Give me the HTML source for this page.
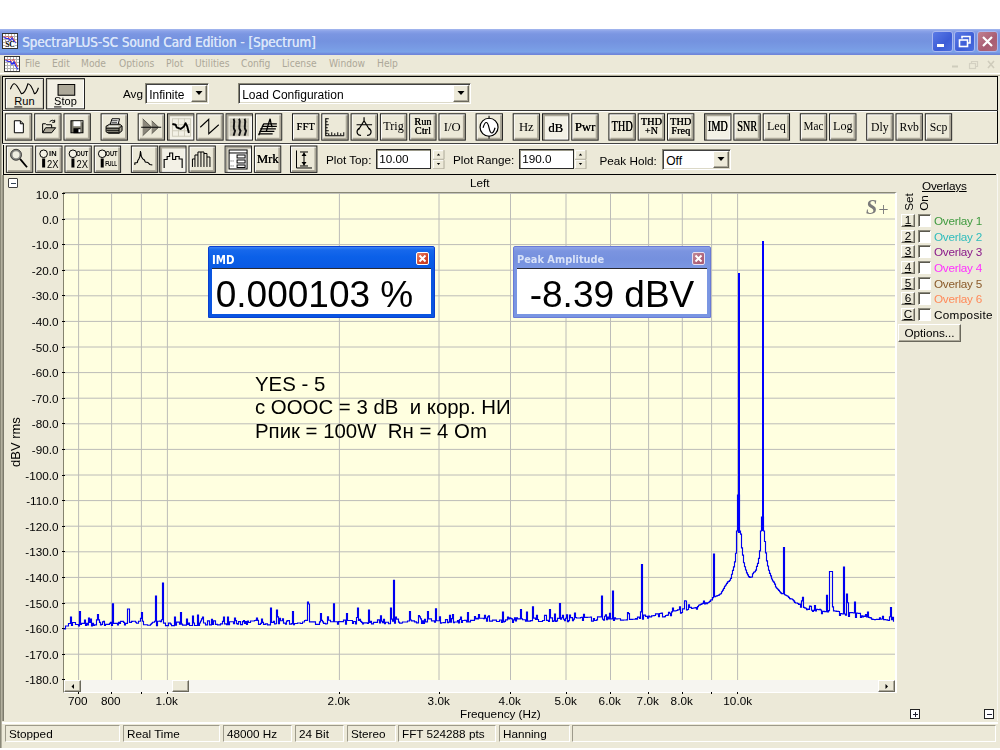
<!DOCTYPE html>
<html lang="ru"><head><meta charset="utf-8"><title>SpectraPLUS-SC Sound Card Edition - [Spectrum]</title>
<style>
html,body{margin:0;padding:0;background:#fff}
body{width:1000px;height:750px;position:relative;overflow:hidden;font-family:"Liberation Sans",sans-serif;font-size:11.720px;color:#000;line-height:1}
.a{position:absolute}
.t{position:absolute;white-space:nowrap;line-height:14px}
#app{left:0;top:55px;width:1000px;height:693px;background:#ece9d8}
#title{left:0;top:29px;width:1000px;height:26px;background:linear-gradient(#a6b8ee 0,#8aa2e8 2px,#7b96e2 5px,#7492df 12px,#789be4 19px,#7ba3e8 23px,#6f86da 25px,#6f86da 26px)}
.tt{font:13.3px "DejaVu Sans Condensed","DejaVu Sans",sans-serif;color:#dce6fa;text-shadow:0.4px 0 0 #dce6fa;line-height:16px}
.menu{top:57px;font:10.2px "DejaVu Sans Condensed","DejaVu Sans",sans-serif;color:#aca899;line-height:14px}
.tb{position:absolute;left:2px;width:995px;border-top:1px solid #000;border-left:1px solid #000;box-sizing:border-box}
.b{position:absolute;box-sizing:border-box;width:28px;height:28px;border:1px solid #1c1c1c;background:#ece9d8;box-shadow:inset 1px 1px 0 #fff,inset -1px -1px 0 #aca899,inset -2px -2px 0 #aca899}
.b.p{background:#f3f1e6;box-shadow:inset 1px 1px 0 #aca899,inset 2px 2px 0 #aca899,inset -1px -1px 0 #fff}
.b span{position:absolute;left:0;width:26px;text-align:center;font-family:"Liberation Serif",serif;white-space:nowrap}
.b svg{position:absolute;left:0;top:0}
.inp{position:absolute;box-sizing:border-box;background:#fff;border:1px solid;border-color:#8a8878 #fff #fff #8a8878;box-shadow:inset 1px 1px 0 #404040,inset -1px -1px 0 #dcd9c8}
.inp2{position:absolute;box-sizing:border-box;background:#fff;border:1px solid #2a2a2a;box-shadow:inset 1px 1px 0 #9a9888}
.cb{position:absolute;box-sizing:border-box;background:#ece9d8;border:1px solid #fff;border-right-color:#6a685c;border-bottom-color:#6a685c;box-shadow:inset -1px -1px 0 #aca899}
</style></head>
<body>
<div class="a" id="title"></div>
<div class="a" id="app"></div>
<svg class="a" style="left:2px;top:33px" width="16" height="16" viewBox="0 0 16 16"><rect x="0.500" y="0.500" width="15" height="15" fill="#fff" stroke="#333"/><path d="M3.500 1v14M6.500 1v14M9.500 1v14M12.500 1v14M1 3.500h14M1 6.500h14M1 9.500h14M1 12.500h14" stroke="#b4b4b4" stroke-width="1"/><path d="M1.500 3.500l2.500 1 1.500-1.500 2 2.500 2-2.500 2 3 2 2.500" stroke="#e8403a" stroke-width="0.900" fill="none"/><path d="M1.500 4.500l3 1 2 0 1.500 2 2-2.500 2 3.500 1.500 1.500" stroke="#2a2af0" stroke-width="1.100" fill="none"/><rect x="3" y="9" width="10" height="6" fill="#fff" fill-opacity="0.850"/><text x="3.200" y="14.300" font-family="Liberation Serif,serif" font-weight="bold" font-size="7.500" fill="#000">SC</text></svg>
<div class="a" style="left:0;top:29px"><div class="t tt" style="left:22px;top:6px">SpectraPLUS-SC Sound Card Edition - [Spectrum]</div></div>
<div class="a" style="left:932px;top:31px;width:19px;height:19px;border:1px solid #a9b8f0;border-radius:3px;background:linear-gradient(135deg,#5a7ae6,#3c5cd6 60%,#4a6ee0)"><svg width="19" height="19" viewBox="0 0 19 19" class="a" style="left:0;top:0"><rect x="4" y="12" width="7" height="3" fill="#fff"/></svg></div>
<div class="a" style="left:954px;top:31px;width:19px;height:19px;border:1px solid #a9b8f0;border-radius:3px;background:linear-gradient(135deg,#5a7ae6,#3c5cd6 60%,#4a6ee0)"><svg width="19" height="19" viewBox="0 0 19 19" class="a" style="left:0;top:0"><path d="M7 6.5V4.500h8v6.500h-2.500" fill="none" stroke="#fff" stroke-width="1.6"/><rect x="4.5" y="8" width="8" height="6.500" fill="none" stroke="#fff" stroke-width="1.6"/></svg></div>
<div class="a" style="left:977px;top:31px;width:19px;height:19px;border:1px solid #a9b8f0;border-radius:3px;background:linear-gradient(135deg,#c08090,#a85c72 60%,#b06a7c)"><svg width="19" height="19" viewBox="0 0 19 19" class="a" style="left:0;top:0"><path d="M5 5l9 9M14 5l-9 9" stroke="#fff" stroke-width="2.2"/></svg></div>
<svg class="a" style="left:4px;top:56px" width="16" height="16" viewBox="0 0 16 16"><rect x="0.500" y="0.500" width="15" height="15" fill="#fff" stroke="#333"/><path d="M3.500 1v14M6.500 1v14M9.500 1v14M12.500 1v14M1 3.500h14M1 6.500h14M1 9.500h14M1 12.500h14" stroke="#b4b4b4" stroke-width="1"/><path d="M1.500 3.500l2.500 1 1.500-1.500 2 2.500 2-2.500 2 4 2.500 4" stroke="#e8403a" stroke-width="0.900" fill="none"/><path d="M1.500 4.500l3 1 2 0 1.500 3 2-2.500 2 4.500 2 3" stroke="#2a2af0" stroke-width="1.200" fill="none"/></svg>
<div class="t menu" style="left:25px">File</div><div class="t menu" style="left:52px">Edit</div><div class="t menu" style="left:81px">Mode</div><div class="t menu" style="left:119px">Options</div><div class="t menu" style="left:166px">Plot</div><div class="t menu" style="left:195px">Utilities</div><div class="t menu" style="left:241px">Config</div><div class="t menu" style="left:282px">License</div><div class="t menu" style="left:329px">Window</div><div class="t menu" style="left:377px">Help</div>
<svg class="a" style="left:945px;top:57px" width="54" height="16" viewBox="0 0 54 16"><path d="M7 9.500h6" stroke="#cfccbc" stroke-width="2"/><path d="M26.500 6V4.500h6v5h-2" fill="none" stroke="#d4d1c2" stroke-width="1.2"/><rect x="24.500" y="6.500" width="6" height="5" fill="none" stroke="#d4d1c2" stroke-width="1.2"/><path d="M43 4l6 7M49 4l-6 7" stroke="#cfccbc" stroke-width="1.6"/></svg>
<div class="a" style="left:0;top:73px;width:1000px;height:1px;background:#fff"></div><div class="a" style="left:0;top:75px;width:1000px;height:1px;background:#b4b1a0"></div>
<div class="a" style="left:2px;top:76px;width:996px;height:1px;background:#000"></div>
<div class="a" style="left:2px;top:76px;width:1px;height:68px;background:#000"></div><div class="a" style="left:3px;top:144px;width:1px;height:31px;background:#000"></div>
<div class="a" style="left:997px;top:76px;width:1px;height:67px;background:#000"></div>
<div class="a" style="left:2px;top:110px;width:996px;height:1px;background:#333"></div>
<div class="a" style="left:3px;top:111px;width:994px;height:1px;background:#fff"></div>
<div class="a" style="left:2px;top:143px;width:996px;height:1px;background:#444"></div>
<div class="a" style="left:3px;top:144px;width:994px;height:1px;background:#fff"></div>
<div class="a" style="left:3px;top:174px;width:993px;height:1px;background:#000"></div>
<div class="a" style="left:0;top:0;width:1024px;height:200px;transform:scale(0.9765625);transform-origin:0 0">
<div class="b" style="left:5px;top:80px;width:40px;height:32px;box-shadow:inset 1px 1px 0 #fff,inset -1px -1px 0 #d0cdbc"><svg width="38" height="30" viewBox="0 0 37 29"><path d="M4.500 10Q6.500 4.500 8.500 4.500T15.500 14.500Q19 14.500 22 4.500Q25 4.500 28.500 14.500Q30.500 14.500 32.500 8.500" fill="none" stroke="#000" stroke-width="1.100"/></svg><span style="top:16px;width:38px;font:11.300px 'Liberation Sans',sans-serif;line-height:14px"><u>R</u>un</span></div>
<div class="b p" style="left:47px;top:80px;width:40px;height:32px;box-shadow:inset 1px 1px 0 #d0cdbc,inset -1px -1px 0 #fff"><div class="a" style="left:11px;top:5px;width:16px;height:10px;background:#aca899;border:1px solid #000"></div><span style="top:16px;width:38px;font:11.300px 'Liberation Sans',sans-serif;line-height:14px"><u>S</u>top</span></div>
</div>
<div class="t" style="left:123px;top:87px">Avg</div>
<div class="inp" style="left:145px;top:83px;width:64px;height:21px"><div class="t" style="left:3.200px;top:3.5px;font-size:12px">Infinite</div><div class="cb" style="right:1px;top:1px;width:16px;height:17px"><svg class="a" style="left:3px;top:5px" width="8" height="4" viewBox="0 0 8 4"><path d="M0.500 0h7L4 4z" fill="#000"/></svg></div></div>
<div class="inp" style="left:238px;top:83px;width:233px;height:21px"><div class="t" style="left:3.200px;top:3.5px;font-size:12px">Load Configuration</div><div class="cb" style="right:1px;top:1px;width:16px;height:17px"><svg class="a" style="left:3px;top:5px" width="8" height="4" viewBox="0 0 8 4"><path d="M0.500 0h7L4 4z" fill="#000"/></svg></div></div>
<div class="inp" style="left:662px;top:149px;width:69px;height:21px"><div class="t" style="left:3.200px;top:3.5px;font-size:12px">Off</div><div class="cb" style="right:1px;top:1px;width:16px;height:17px"><svg class="a" style="left:3px;top:5px" width="8" height="4" viewBox="0 0 8 4"><path d="M0.500 0h7L4 4z" fill="#000"/></svg></div></div>
<div class="a" style="left:0;top:0;width:1024px;height:200px;transform:scale(0.9765625);transform-origin:0 0">
<div class="b" style="left:5px;top:116px"><svg width="26" height="26" viewBox="0 0 25.400 25.400"><path d="M8.500 6.500h6l3 3v9h-9z" fill="#fff" stroke="#000"/><path d="M14.500 6.500v3h3" fill="none" stroke="#000"/></svg></div>
<div class="b" style="left:35px;top:116px"><svg width="26" height="26" viewBox="0 0 25.400 25.400"><path d="M7.500 18.500v-9h3l1 1h5v3" fill="#ece9d8" stroke="#000"/><path d="M7.500 18.500l3-5h10l-4 5z" fill="#aca899" stroke="#000"/><path d="M14.500 7.500c2-2 4-2 5 0M19.500 5.500v2.500h-2.500" fill="none" stroke="#000"/></svg></div>
<div class="b" style="left:65px;top:116px"><svg width="26" height="26" viewBox="0 0 25.400 25.400"><rect x="6.500" y="6.500" width="12" height="12" fill="#7c7a6c" stroke="#000"/><rect x="9" y="7" width="7" height="5" fill="#fff"/><rect x="9" y="14" width="7" height="5" fill="#000"/><rect x="14" y="15" width="2" height="3" fill="#fff"/><rect x="17" y="7" width="1" height="1" fill="#fff"/></svg></div>
<div class="b" style="left:103px;top:116px"><svg width="26" height="26" viewBox="0 0 25.400 25.400"><path d="M8.500 10.500l2-6h7.500l-1.500 6" fill="#fff" stroke="#000"/><path d="M10.500 6.500h5.500M10 8.500h5.500" stroke="#000" stroke-width="0.800"/><path d="M4.500 12l3.500-2h10.500l2 2v4.500l-3 2.500h-10.500l-2.500-1.500z" fill="#a9a696" stroke="#000"/><path d="M4.500 14h13l3-2.500M17.500 14v5M5 16h12.500M6 18h11" fill="none" stroke="#000"/><path d="M7 12h10" stroke="#fff"/></svg></div>
<div class="b" style="left:141px;top:116px"><svg width="26" height="26" viewBox="0 0 25.400 25.400"><path d="M4 4.500l9 8.500-9 8.500zM13 6.500l7 6.500-7 6.500z" fill="#6f6c60" fill-opacity="0.780"/><path d="M2.500 13h20" stroke="#000" stroke-width="1.100"/><path d="M4 4.500l9 8.500-9 8.500M13 6.500l7 6.500-7 6.500" fill="none" stroke="#3a382f" stroke-width="0.700"/></svg></div>
<div class="b p" style="left:171px;top:116px"><svg width="26" height="26" viewBox="0 0 25.400 25.400"><path d="M10.500 4v18M16.500 4v18M4.500 10.500h18M4.500 16.500h18" stroke="#cfccbc"/><rect x="4.500" y="4.500" width="18" height="17.500" fill="none" stroke="#cfccbc"/><path d="M4.400 9.700L7.700 10.500 8.600 13 12.700 14.700 16 12.200 17.600 8.900 19.300 12.200 20.900 18.800" fill="none" stroke="#000" stroke-width="1.900" stroke-linejoin="round"/></svg></div>
<div class="b" style="left:201px;top:116px"><svg width="26" height="26" viewBox="0 0 25.400 25.400"><path d="M3 13L11.500 5V19.500L21.500 10.500" fill="none" stroke="#000" stroke-width="1.050"/></svg></div>
<div class="b p" style="left:231px;top:116px"><svg width="26" height="26" viewBox="0 0 25.400 25.400"><rect x="3" y="4" width="19.500" height="18" fill="#cbc8b8"/><path d="M4 8h18M4 12h18M4 16h18M4 20h18" stroke="#b0ad9d" stroke-width="0.800" stroke-dasharray="1 1"/><path d="M7 4.500c2.500 4-2 8 1.500 12l-1.500 5M12.500 4.500c2.500 4-2 8 1.500 12l-1.500 5M18 4.500c2.500 4-2 8 1.500 12l-1.500 5" fill="none" stroke="#111" stroke-width="1.900"/></svg></div>
<div class="b" style="left:261px;top:116px"><svg width="26" height="26" viewBox="0 0 25.400 25.400"><path d="M7.700 9.700H21M6 12.200H21M4.400 14.700H20M3.600 17.200H18.500M2.800 19.600H16.800" stroke="#000" stroke-width="1.200"/><path d="M2.800 21l5-11.500M10.500 17l2-7 1.800-5.500 1 5.500 1.200 3" fill="none" stroke="#000" stroke-width="1.300"/></svg></div>
<div class="b" style="left:299px;top:116px"><span style="top:7px;font-size:10.5px;line-height:12.5px;letter-spacing:0.3px;transform:scale(1,1.1);"><b style="font-weight:normal;text-shadow:0.250px 0 0 #000">FFT</b></span></div>
<div class="b" style="left:329px;top:116px"><svg width="26" height="26" viewBox="0 0 25.400 25.400"><path d="M3.500 4v17.500H22" fill="none" stroke="#000" stroke-width="1.100"/><path d="M3.500 4.500h3M3.500 7.500h2M3.500 10.500h3M3.500 13.500h2M3.500 16.500h3M3.500 19h2M6.500 21v-2M9.500 21v-3M12.500 21v-2M15.500 21v-3M18.500 21v-2M21.500 21v-3" stroke="#000"/></svg></div>
<div class="b" style="left:359px;top:116px"><svg width="26" height="26" viewBox="0 0 25.400 25.400"><path d="M12.500 3v5M12.500 6.500L7 15.500M12.500 6.500l5.500 9M5 10.500h15.500" fill="none" stroke="#000" stroke-width="1.200"/><path d="M7.500 14c-3.500 3-2 7.500 2 7M17.500 14c3.500 3 2 7.500-2 7" fill="none" stroke="#000" stroke-width="1.200"/></svg></div>
<div class="b" style="left:389px;top:116px"><span style="top:5px;font-size:12.4px;line-height:14.4px;letter-spacing:0px;">Trig</span></div>
<div class="b" style="left:419px;top:116px"><span style="top:1.500px;font-size:10.5px;line-height:11.5px;text-shadow:0.200px 0 0 #000">Run</span><span style="top:10.500px;font-size:10.5px;line-height:11.5px;text-shadow:0.200px 0 0 #000">Ctrl</span></div>
<div class="b" style="left:449px;top:116px"><span style="top:5px;font-size:13px;line-height:15px;letter-spacing:0px;">I/O</span></div>
<div class="b" style="left:487px;top:116px"><svg width="26" height="26" viewBox="0 0 25.400 25.400"><circle cx="12.500" cy="13" r="9" fill="#fff" stroke="#000" stroke-width="1.200"/><path d="M12.500 1.500v3M12.500 21.500v3" stroke="#000"/><path d="M6.500 13.500c2-7 4.500-7 6 0s4 7 6 0" fill="none" stroke="#000" stroke-width="1.200"/></svg></div>
<div class="b" style="left:525px;top:116px"><span style="top:5px;font-size:13px;line-height:15px;letter-spacing:0px;">Hz</span></div>
<div class="b p" style="left:555px;top:116px"><span style="top:6px;font-size:13px;line-height:15px;letter-spacing:0px;"><b style="font-weight:normal;text-shadow:0.250px 0 0 #000">dB</b></span></div>
<div class="b" style="left:585px;top:116px"><span style="top:5.5px;font-size:12.5px;line-height:14.5px;letter-spacing:0px;transform:scale(1.05,1.05);"><b style="font-weight:normal;text-shadow:0.250px 0 0 #000">Pwr</b></span></div>
<div class="b" style="left:623px;top:116px"><span style="top:7px;font-size:10.5px;line-height:12.5px;letter-spacing:0px;transform:scale(1,1.35);"><b style="font-weight:normal;text-shadow:0.300px 0 0 #000">THD</b></span></div>
<div class="b" style="left:653px;top:116px"><span style="top:1.500px;font-size:10.5px;line-height:11.5px;text-shadow:0.200px 0 0 #000">THD</span><span style="top:10.500px;font-size:10.5px;line-height:11.5px;text-shadow:0.200px 0 0 #000">+N</span></div>
<div class="b" style="left:683px;top:116px"><span style="top:1.500px;font-size:10.5px;line-height:11.5px;text-shadow:0.200px 0 0 #000">THD</span><span style="top:10.500px;font-size:10.5px;line-height:11.5px;text-shadow:0.200px 0 0 #000">Freq</span></div>
<div class="b p" style="left:721px;top:116px"><span style="top:7px;font-size:10.5px;line-height:12.5px;letter-spacing:0px;transform:scale(1,1.35);"><b style="font-weight:normal;text-shadow:0.300px 0 0 #000">IMD</b></span></div>
<div class="b" style="left:751px;top:116px"><span style="top:7px;font-size:10.5px;line-height:12.5px;letter-spacing:0px;transform:scale(1,1.35);"><b style="font-weight:normal;text-shadow:0.300px 0 0 #000">SNR</b></span></div>
<div class="b" style="left:781px;top:116px"><span style="top:5px;font-size:12.5px;line-height:14.5px;letter-spacing:0px;transform:scale(1,1.1);">Leq</span></div>
<div class="b" style="left:819px;top:116px"><span style="top:6px;font-size:11.5px;line-height:13.5px;letter-spacing:0px;transform:scale(1,1.15);">Mac</span></div>
<div class="b" style="left:849px;top:116px"><span style="top:5px;font-size:12.5px;line-height:14.5px;letter-spacing:0px;transform:scale(1,1.1);">Log</span></div>
<div class="b" style="left:887px;top:116px"><span style="top:6px;font-size:12px;line-height:14px;letter-spacing:0px;transform:scale(1,1.15);">Dly</span></div>
<div class="b" style="left:917px;top:116px"><span style="top:6px;font-size:12px;line-height:14px;letter-spacing:0px;transform:scale(1,1.15);">Rvb</span></div>
<div class="b" style="left:947px;top:116px"><span style="top:6px;font-size:12px;line-height:14px;letter-spacing:0px;transform:scale(1,1.15);">Scp</span></div>
<div class="b" style="left:6px;top:149px"><svg width="26" height="26" viewBox="0 0 25.400 25.400"><circle cx="9.200" cy="8.300" r="4.500" fill="#f0eee2" stroke="#8a8a86" stroke-width="2"/><circle cx="9.200" cy="8.300" r="5.500" fill="none" stroke="#222" stroke-width="0.800"/><path d="M13.200 12.400l7 8.400" stroke="#000" stroke-width="1.800"/></svg></div>
<div class="b" style="left:36px;top:149px"><svg width="26" height="26" viewBox="0 0 25.400 25.400"><circle cx="7.500" cy="7.300" r="3.800" fill="#f4f2e6" stroke="#000"/><path d="M7.500 12v8l0 1" stroke="#000" stroke-width="3"/><text x="13" y="9.800" font-family="Liberation Sans,sans-serif" font-weight="bold" font-size="6.500" fill="#000" textLength="7.5" lengthAdjust="spacingAndGlyphs">IN</text><text x="11" y="21.300" font-family="Liberation Sans,sans-serif" font-weight="normal" font-size="11.2" fill="#000" textLength="11.5" lengthAdjust="spacingAndGlyphs">2X</text></svg></div>
<div class="b" style="left:66px;top:149px"><svg width="26" height="26" viewBox="0 0 25.400 25.400"><circle cx="7.500" cy="7.300" r="3.800" fill="#f4f2e6" stroke="#000"/><path d="M7.500 12v8l0 1" stroke="#000" stroke-width="3"/><text x="10.8" y="9.800" font-family="Liberation Sans,sans-serif" font-weight="bold" font-size="6.500" fill="#000" textLength="12" lengthAdjust="spacingAndGlyphs">OUT</text><text x="11" y="21.300" font-family="Liberation Sans,sans-serif" font-weight="normal" font-size="11.2" fill="#000" textLength="11.5" lengthAdjust="spacingAndGlyphs">2X</text></svg></div>
<div class="b" style="left:96px;top:149px"><svg width="26" height="26" viewBox="0 0 25.400 25.400"><circle cx="7.500" cy="7.300" r="3.800" fill="#f4f2e6" stroke="#000"/><path d="M7.500 12v8l0 1" stroke="#000" stroke-width="3"/><text x="10.8" y="9.800" font-family="Liberation Sans,sans-serif" font-weight="bold" font-size="6.500" fill="#000" textLength="12" lengthAdjust="spacingAndGlyphs">OUT</text><text x="10.5" y="19.500" font-family="Liberation Sans,sans-serif" font-weight="bold" font-size="6.8" fill="#000" textLength="12.0" lengthAdjust="spacingAndGlyphs">FULL</text></svg></div>
<div class="b" style="left:133.5px;top:149px"><svg width="26" height="26" viewBox="0 0 25.400 25.400"><path d="M3 18.500V16.500L5.500 16 6 14 7 12.500 8 10 8.700 4.500 9.500 10 11 12.500 12.500 13.500 13.500 15.500 16 16 18 18 20.500 18.500" fill="none" stroke="#000" stroke-width="1.100"/></svg></div>
<div class="b p" style="left:163.4px;top:149px"><svg width="26" height="26" viewBox="0 0 25.400 25.400"><path d="M4 21.500V13H7V10H9.500V6.500H12.500V13H15.500V10H19V12.500H22V21.500" fill="none" stroke="#000" stroke-width="1.150"/></svg></div>
<div class="b" style="left:193px;top:149px"><svg width="26" height="26" viewBox="0 0 25.400 25.400"><path d="M3 20.500V12.500H5.500V20.500M5.500 12.500V8.500H8.500V20.500M8.500 8.500V5.500H11.500V20.500M11.500 5.500H14.500V20.500M14.500 7H17.500V20.500M17.500 10.500H20.500V20.500" fill="none" stroke="#000" stroke-width="1"/></svg></div>
<div class="b p" style="left:230px;top:149px"><svg width="26" height="26" viewBox="0 0 25.400 25.400"><rect x="3.500" y="3.500" width="18" height="19" fill="#fff" stroke="#000"/><path d="M3.500 6.500h18" stroke="#000"/><rect x="11.500" y="8.500" width="8" height="3" fill="#fff" stroke="#000"/><rect x="11.500" y="13.500" width="8" height="3" fill="#fff" stroke="#000"/><rect x="11.500" y="18.500" width="8" height="2.500" fill="#fff" stroke="#000"/><path d="M5 14.500h4M5 19.500h4" stroke="#555" stroke-dasharray="1 1"/></svg></div>
<div class="b" style="left:260px;top:149px"><span style="top:5px;font-size:13px;line-height:15px;letter-spacing:0px;"><b style="font-weight:normal;text-shadow:0.300px 0 0 #000">Mrk</b></span></div>
<div class="b" style="left:297px;top:149px"><svg width="26" height="26" viewBox="0 0 25.400 25.400"><path d="M5.500 4v17.500H21" fill="none" stroke="#000"/><path d="M9 5.500h8M9 19.500h8M13 6v13" stroke="#000"/><path d="M13 6l-2.500 3.500h5zM13 19l-2.500-3.500h5z" fill="#000"/></svg></div>
</div>
<div class="t" style="left:326px;top:152.500px">Plot Top:</div>
<div class="inp2" style="left:376px;top:149px;width:55px;height:20px"><div class="t" style="left:2.300px;top:2px">10.00</div></div>
<div class="t" style="left:453px;top:152.500px">Plot Range:</div>
<div class="inp2" style="left:519px;top:149px;width:55px;height:20px"><div class="t" style="left:2.300px;top:2px">190.0</div></div>
<div class="t" style="left:599.500px;top:154px">Peak Hold:</div>
<svg class="a" style="left:433px;top:149.5px" width="11.500" height="19.500" viewBox="0 0 12 20"><rect x="0" y="0" width="12" height="20" fill="#ece9d8"/><path d="M0.500 9.500V0.500h10M0.500 19.500v-9h10" stroke="#fff" fill="none"/><path d="M11.500 0v9.500H0M11.500 10.500v9H0" stroke="#aca899" fill="none"/><path d="M4 5.500h3.500l-1.750-2zM4 13.500h3.500l-1.750 2z" fill="#000"/></svg>
<svg class="a" style="left:575px;top:149.5px" width="11.500" height="19.500" viewBox="0 0 12 20"><rect x="0" y="0" width="12" height="20" fill="#ece9d8"/><path d="M0.500 9.500V0.500h10M0.500 19.500v-9h10" stroke="#fff" fill="none"/><path d="M11.500 0v9.500H0M11.500 10.500v9H0" stroke="#aca899" fill="none"/><path d="M4 5.500h3.500l-1.750-2zM4 13.500h3.500l-1.750 2z" fill="#000"/></svg>
<div class="a" style="left:8px;top:178px;width:8px;height:8px;background:#fff;border:1px solid #404040;border-radius:1px"><div class="a" style="left:1.500px;top:3.500px;width:5px;height:1px;background:#345"></div></div>
<div class="t" style="left:470px;top:176px">Left</div>
<div class="a" style="left:63px;top:192px;width:834px;height:501px;background:#ffffe0;border-top:1px solid #85836f;border-left:1px solid #85836f;border-right:2px solid #fff;border-bottom:1px solid #fff;box-sizing:border-box"></div>
<svg class="a" style="left:0;top:0" width="1000" height="750" viewBox="0 0 1000 750"><path d="M64 193.4H895M64 219.0H895M64 244.6H895M64 270.2H895M64 295.8H895M64 321.4H895M64 347.0H895M64 372.6H895M64 398.2H895M64 423.8H895M64 449.4H895M64 475.0H895M64 500.6H895M64 526.2H895M64 551.8H895M64 577.4H895M64 603.0H895M64 628.6H895M64 654.2H895M78.6 193V680M111.6 193V680M141.4 193V680M167.4 193V680M339.4 193V680M439.0 193V680M510.5 193V680M566.0 193V680M610.5 193V680M648.6 193V680M682.3 193V680M711.6 193V680M737.6 193V680" stroke="#bcbcb8" stroke-width="1" fill="none"/><path d="M62 193.5h3M62 219.5h3M62 244.5h3M62 270.5h3M62 295.5h3M62 321.5h3M62 347.5h3M62 372.5h3M62 398.5h3M62 423.5h3M62 449.5h3M62 475.5h3M62 500.5h3M62 526.5h3M62 551.5h3M62 577.5h3M62 603.5h3M62 628.5h3M62 654.5h3M62 679.5h3M78.5 691v3M111.5 691v3M141.5 691v3M167.5 691v3M339.5 691v3M439.5 691v3M510.5 691v3M566.5 691v3M610.5 691v3M648.5 691v3M682.5 691v3M711.5 691v3M737.5 691v3" stroke="#000" stroke-width="1" fill="none" shape-rendering="crispEdges"/><path d="M63.5 629.0H64.5V629.0H65.5V626.0H66.5V626.0H67.5V626.0H68.5V623.5H69.5V623.5H70.5V617.0H71.5V625.5H72.5V622.5H73.5V622.5H74.5V622.5H75.5V624.5H76.5V624.5H77.5V624.5H78.5V626.0H79.5V611.5H80.5V624.4H81.5V623.4H82.5V623.4H83.5V623.4H84.5V620.0H85.5V625.4H86.5V623.4H87.5V624.9H88.5V618.0H89.5V622.4H90.5V619.0H91.5V625.9H92.5V623.4H93.5V625.4H94.5V624.9H95.5V624.9H96.5V619.8H97.5V614.6H98.5V619.9H99.5V622.4H100.5V624.9H101.5V624.4H102.5V621.9H103.5V621.4H104.5V625.4H105.5V624.4H106.5V624.3H107.5V624.3H108.5V624.3H109.5V623.3H110.5V622.3H111.5V625.3H112.5V603.7H113.5V623.3H114.5V623.3H115.5V623.3H116.5V623.3H117.5V624.8H118.5V622.3H119.5V623.3H120.5V621.3H121.5V621.3H122.5V621.3H123.5V622.3H124.5V624.8H125.5V623.3H126.5V623.3H127.5V609.0H128.5V609.0H129.5V622.3H130.5V622.3H131.5V621.3H132.5V621.2H133.5V621.2H134.5V621.2H135.5V622.2H136.5V623.2H137.5V623.2H138.5V621.2H139.5V621.2H140.5V618.4H141.5V612.5H142.5V621.2H143.5V624.7H144.5V624.7H145.5V624.7H146.5V624.7H147.5V625.2H148.5V625.2H149.5V625.2H150.5V624.2H151.5V623.2H152.5V622.2H153.5V622.2H154.5V621.2H155.5V596.0H156.5V625.7H157.5V621.2H158.5V621.2H159.5V621.1H160.5V621.6H161.5V619.7H162.5V583.0H163.5V623.1H164.5V623.1H165.5V625.6H166.5V625.6H167.5V625.6H168.5V623.1H169.5V623.1H170.5V624.1H171.5V625.6H172.5V625.6H173.5V625.6H174.5V617.0H175.5V625.1H176.5V622.1H177.5V622.1H178.5V622.1H179.5V624.1H180.5V612.5H181.5V624.1H182.5V625.1H183.5V625.1H184.5V625.1H185.5V625.1H186.5V619.0H187.5V624.5H188.5V623.0H189.5V625.5H190.5V625.5H191.5V625.5H192.5V616.0H193.5V623.0H194.5V625.5H195.5V625.5H196.5V625.5H197.5V615.0H198.5V625.5H199.5V623.0H200.5V621.0H201.5V618.8H202.5V617.0H203.5V623.0H204.5V623.0H205.5V624.9H206.5V624.9H207.5V620.9H208.5V620.9H209.5V624.9H210.5V624.9H211.5V619.3H212.5V624.4H213.5V620.9H214.5V620.9H215.5V624.3H216.5V624.3H217.5V624.8H218.5V624.8H219.5V624.8H220.5V623.8H221.5V623.8H222.5V621.3H223.5V617.0H224.5V623.8H225.5V623.7H226.5V624.7H227.5V617.0H228.5V624.7H229.5V621.7H230.5V621.7H231.5V621.7H232.5V621.7H233.5V623.7H234.5V618.0H235.5V620.6H236.5V623.6H237.5V624.1H238.5V621.6H239.5V621.6H240.5V624.6H241.5V624.6H242.5V621.6H243.5V620.6H244.5V623.5H245.5V621.5H246.5V624.5H247.5V621.0H248.5V622.5H249.5V622.5H250.5V621.0H251.5V621.0H252.5V621.0H253.5V621.0H254.5V620.5H255.5V620.4H256.5V618.0H257.5V620.4H258.5V624.4H259.5V624.4H260.5V623.4H261.5V619.0H262.5V622.4H263.5V624.4H264.5V624.4H265.5V623.8H266.5V623.8H267.5V624.8H268.5V624.8H269.5V624.8H270.5V608.0H271.5V622.3H272.5V622.3H273.5V621.3H274.5V623.8H275.5V623.7H276.5V610.0H277.5V616.9H278.5V623.7H279.5V618.3H280.5V620.7H281.5V620.7H282.5V618.9H283.5V623.2H284.5V623.1H285.5V624.1H286.5V621.1H287.5V620.6H288.5V620.6H289.5V624.1H290.5V624.1H291.5V623.6H292.5V611.5H293.5V624.6H294.5V623.5H295.5V623.5H296.5V623.5H297.5V623.0H298.5V623.0H299.5V623.0H300.5V623.5H301.5V623.5H302.5V622.0H303.5V622.0H304.5V620.5H305.5V620.4H306.5V620.4H307.5V602.0H308.5V604.0H309.5V621.9H310.5V621.9H311.5V621.9H312.5V621.9H313.5V621.9H314.5V621.9H315.5V624.4H316.5V624.3H317.5V624.3H318.5V624.3H319.5V621.8H320.5V613.5H321.5V620.3H322.5V621.8H323.5V623.3H324.5V623.3H325.5V623.8H326.5V623.7H327.5V616.7H328.5V620.2H329.5V620.2H330.5V621.7H331.5V621.7H332.5V621.7H333.5V603.7H334.5V621.7H335.5V621.7H336.5V621.7H337.5V624.1H338.5V621.6H339.5V621.6H340.5V621.6H341.5V621.6H342.5V621.6H343.5V620.1H344.5V620.1H345.5V624.1H346.5V613.5H347.5V620.5H348.5V620.5H349.5V620.5H350.5V620.5H351.5V620.5H352.5V623.5H353.5V621.5H354.5V621.5H355.5V624.0H356.5V617.5H357.5V608.0H358.5V620.4H359.5V619.4H360.5V621.4H361.5V622.4H362.5V623.9H363.5V622.9H364.5V622.9H365.5V622.9H366.5V622.9H367.5V623.4H368.5V610.0H369.5V622.3H370.5V621.3H371.5V623.8H372.5V623.8H373.5V622.3H374.5V622.3H375.5V622.3H376.5V622.3H377.5V619.8H378.5V619.8H379.5V622.8H380.5V615.8H381.5V621.2H382.5V622.7H383.5V619.2H384.5V623.7H385.5V622.2H386.5V622.2H387.5V622.2H388.5V623.7H389.5V623.7H390.5V608.0H391.5V619.1H392.5V621.1H393.5V580.4H394.5V623.1H395.5V617.0H396.5V619.1H397.5V619.1H398.5V622.1H399.5V623.1H400.5V623.1H401.5V623.0H402.5V622.0H403.5V622.0H404.5V622.0H405.5V622.0H406.5V622.0H407.5V621.0H408.5V621.0H409.5V611.5H410.5V620.0H411.5V621.0H412.5V620.9H413.5V620.9H414.5V621.9H415.5V621.9H416.5V622.9H417.5V622.9H418.5V615.6H419.5V616.9H420.5V618.9H421.5V623.4H422.5V620.8H423.5V623.3H424.5V619.3H425.5V621.8H426.5V621.8H427.5V611.5H428.5V618.8H429.5V618.8H430.5V618.8H431.5V620.8H432.5V620.8H433.5V620.7H434.5V622.2H435.5V608.7H436.5V620.7H437.5V620.7H438.5V620.7H439.5V616.7H440.5V623.2H441.5V622.7H442.5V622.7H443.5V622.6H444.5V622.6H445.5V619.6H446.5V619.6H447.5V622.6H448.5V622.1H449.5V615.2H450.5V622.1H451.5V618.6H452.5V614.6H453.5V622.6H454.5V622.0H455.5V622.0H456.5V622.0H457.5V620.5H458.5V623.0H459.5V619.5H460.5V617.0H461.5V622.5H462.5V620.5H463.5V620.5H464.5V620.4H465.5V620.4H466.5V621.9H467.5V612.5H468.5V621.9H469.5V621.9H470.5V620.4H471.5V620.4H472.5V620.3H473.5V620.3H474.5V616.6H475.5V618.8H476.5V618.3H477.5V618.8H478.5V614.6H479.5V618.2H480.5V618.2H481.5V618.2H482.5V618.2H483.5V618.7H484.5V615.3H485.5V618.2H486.5V621.2H487.5V616.8H488.5V615.8H489.5V621.1H490.5V621.1H491.5V621.1H492.5V620.1H493.5V620.1H494.5V620.1H495.5V620.0H496.5V621.5H497.5V621.5H498.5V621.5H499.5V620.0H500.5V620.0H501.5V622.5H502.5V612.0H503.5V622.0H504.5V621.4H505.5V619.9H506.5V619.9H507.5V617.0H508.5V618.9H509.5V617.9H510.5V618.4H511.5V618.9H512.5V622.3H513.5V619.8H514.5V617.8H515.5V620.8H516.5V617.8H517.5V618.8H518.5V618.8H519.5V618.8H520.5V609.6H521.5V618.7H522.5V619.7H523.5V619.7H524.5V619.7H525.5V621.2H526.5V612.0H527.5V621.1H528.5V621.1H529.5V621.1H530.5V620.6H531.5V620.6H532.5V606.7H533.5V618.1H534.5V618.1H535.5V619.5H536.5V615.3H537.5V619.5H538.5V621.5H539.5V621.5H540.5V621.5H541.5V621.5H542.5V620.5H543.5V620.5H544.5V615.2H545.5V615.4H546.5V620.4H547.5V620.4H548.5V621.4H549.5V609.6H550.5V617.9H551.5V617.9H552.5V621.3H553.5V620.8H554.5V614.0H555.5V621.3H556.5V620.8H557.5V618.3H558.5V618.3H559.5V603.6H560.5V619.2H561.5V617.7H562.5V615.2H563.5V619.2H564.5V620.7H565.5V618.2H566.5V614.9H567.5V621.6H568.5V620.6H569.5V615.0H570.5V617.6H571.5V617.6H572.5V620.6H573.5V619.1H574.5V613.0H575.5V617.5H576.5V618.0H577.5V618.0H578.5V618.0H579.5V618.0H580.5V617.5H581.5V617.4H582.5V620.4H583.5V614.4H584.5V617.3H585.5V617.3H586.5V617.3H587.5V617.2H588.5V617.2H589.5V617.2H590.5V617.1H591.5V621.1H592.5V621.1H593.5V618.5H594.5V620.5H595.5V620.5H596.5V619.9H597.5V616.9H598.5V616.9H599.5V616.8H600.5V616.8H601.5V596.0H602.5V619.2H603.5V620.2H604.5V616.2H605.5V614.7H606.5V619.6H607.5V617.1H608.5V619.0H609.5V613.4H610.5V619.0H611.5V618.9H612.5V591.0H613.5V620.4H614.5V617.8H615.5V618.8H616.5V618.8H617.5V618.7H618.5V618.7H619.5V618.7H620.5V620.1H621.5V620.1H622.5V620.1H623.5V620.0H624.5V620.0H625.5V620.0H626.5V619.9H627.5V612.5H628.5V613.6H629.5V619.3H630.5V619.3H631.5V619.3H632.5V619.2H633.5V619.2H634.5V619.2H635.5V618.6H636.5V619.1H637.5V617.1H638.5V617.0H639.5V618.5H640.5V611.8H641.5V564.5H642.5V619.2H643.5V615.1H644.5V615.0H645.5V616.4H646.5V616.3H647.5V618.2H648.5V616.1H649.5V617.0H650.5V616.9H651.5V615.8H652.5V615.7H653.5V615.6H654.5V615.5H655.5V613.9H656.5V613.8H657.5V613.7H658.5V616.6H659.5V613.5H660.5V613.3H661.5V613.1H662.5V617.0H663.5V616.8H664.5V616.6H665.5V615.5H666.5V615.3H667.5V615.1H668.5V612.4H669.5V613.2H670.5V615.6H671.5V611.9H672.5V608.1H673.5V611.0H674.5V610.9H675.5V610.7H676.5V610.5H677.5V609.9H678.5V609.7H679.5V606.8H680.5V613.2H681.5V612.5H682.5V608.8H683.5V609.0H684.5V600.8H685.5V601.0H686.5V609.8H687.5V609.5H688.5V604.7H689.5V607.5H690.5V607.2H691.5V608.5H692.5V608.2H693.5V608.0H694.5V607.8H695.5V607.5H696.5V609.1H697.5V606.6H698.5V605.2H699.5V604.8H700.5V604.3H701.5V603.9H702.5V603.4H703.5V601.0H704.5V603.8H705.5V602.9H706.5V603.6H707.5V602.7H708.5V602.2H709.5V601.3H710.5V600.0H711.5V599.9H712.5V597.6H713.5V554.0H714.5V596.6H715.5V596.2H716.5V595.9H717.5V595.5H718.5V595.1H719.5V594.2H720.5V593.7H721.5V591.7H722.5V590.1H723.5V588.4H724.5V586.2H725.5V585.0H726.5V583.3H727.5V581.9H728.5V581.4H729.5V580.2H730.5V578.3H731.5V574.2H732.5V570.4H733.5V566.9H734.5V561.9H735.5V553.2H736.5V531.0H737.5V495.0H738.5V495.0H739.5V531.0H740.5V534.1H741.5V547.9H742.5V555.1H743.5V562.7H744.5V566.7H745.5V570.0H746.5V572.9H747.5V574.9H748.5V576.6H749.5V577.3H750.5V577.1H751.5V577.0H752.5V573.7H753.5V572.2H754.5V571.7H755.5V570.1H756.5V566.4H757.5V563.4H758.5V558.4H759.5V550.8H760.5V531.0H761.5V517.0H762.5V517.0H763.5V531.0H764.5V541.5H765.5V552.9H766.5V560.9H767.5V566.0H768.5V570.2H769.5V573.3H770.5V575.9H771.5V579.0H772.5V581.0H773.5V582.1H774.5V584.1H775.5V587.0H776.5V588.2H777.5V589.2H778.5V590.4H779.5V591.7H780.5V592.9H781.5V593.6H782.5V593.7H783.5V547.5H784.5V594.7H785.5V595.2H786.5V595.7H787.5V596.2H788.5V597.4H789.5V598.6H790.5V598.9H791.5V599.0H792.5V599.7H793.5V600.8H794.5V602.3H795.5V603.0H796.5V603.0H797.5V603.5H798.5V604.5H799.5V604.0H800.5V607.2H801.5V600.8H802.5V597.3H803.5V607.4H804.5V607.8H805.5V608.2H806.5V609.6H807.5V609.0H808.5V609.3H809.5V606.1H810.5V606.4H811.5V610.2H812.5V611.5H813.5V610.3H814.5V605.5H815.5V610.9H816.5V609.2H817.5V609.5H818.5V609.7H819.5V609.4H820.5V610.0H821.5V613.7H822.5V611.3H823.5V611.4H824.5V611.6H825.5V611.7H826.5V595.2H827.5V612.0H828.5V610.6H829.5V571.5H830.5V571.5H831.5V571.5H832.5V606.9H833.5V610.8H834.5V611.0H835.5V611.1H836.5V611.3H837.5V611.4H838.5V611.5H839.5V615.5H840.5V613.6H841.5V613.7H842.5V613.8H843.5V567.0H844.5V614.0H845.5V615.1H846.5V594.0H847.5V602.7H848.5V616.4H849.5V612.5H850.5V612.6H851.5V612.6H852.5V612.7H853.5V612.8H854.5V602.0H855.5V617.5H856.5V613.1H857.5V613.2H858.5V613.3H859.5V613.4H860.5V617.5H861.5V615.7H862.5V616.9H863.5V616.1H864.5V616.4H865.5V614.6H866.5V616.9H867.5V612.0H868.5V617.3H869.5V617.6H870.5V617.8H871.5V619.1H872.5V619.3H873.5V619.5H874.5V619.7H875.5V619.5H876.5V619.3H877.5V619.2H878.5V619.5H879.5V617.9H880.5V619.2H881.5V619.0H882.5V616.4H883.5V619.7H884.5V619.5H885.5V619.7H886.5V619.9H887.5V620.2H888.5V620.4H889.5V616.7H890.5V607.5H891.5V619.7H892.5V617.4H893.5V621.7" stroke="#0000f0" stroke-width="1.15" fill="none" stroke-linejoin="miter"/><rect x="738" y="273" width="2" height="260" fill="#0000ff"/><rect x="762" y="241" width="2" height="290" fill="#0000ff"/></svg>
<div class="a" style="left:64px;top:680px;width:831px;height:12px;background:#f6f5f0"></div>
<div class="cb" style="left:64px;top:680px;width:17px;height:12px"><svg class="a" style="left:6px;top:2px" width="4" height="7" viewBox="0 0 4 7"><path d="M3 1v5L0.500 3.500z" fill="#000"/></svg></div>
<div class="cb" style="left:878px;top:680px;width:17px;height:12px"><svg class="a" style="left:6px;top:2px" width="4" height="7" viewBox="0 0 4 7"><path d="M0.500 1v5l2.500-2.500z" fill="#000"/></svg></div>
<div class="cb" style="left:172px;top:680px;width:17px;height:12px"></div>
<div class="t" style="left:18.500px;width:40px;text-align:right;top:188px">10.0</div><div class="t" style="left:18.500px;width:40px;text-align:right;top:213px">0.0</div><div class="t" style="left:18.500px;width:40px;text-align:right;top:238px">-10.0</div><div class="t" style="left:18.500px;width:40px;text-align:right;top:264px">-20.0</div><div class="t" style="left:18.500px;width:40px;text-align:right;top:289px">-30.0</div><div class="t" style="left:18.500px;width:40px;text-align:right;top:315px">-40.0</div><div class="t" style="left:18.500px;width:40px;text-align:right;top:341px">-50.0</div><div class="t" style="left:18.500px;width:40px;text-align:right;top:366px">-60.0</div><div class="t" style="left:18.500px;width:40px;text-align:right;top:392px">-70.0</div><div class="t" style="left:18.500px;width:40px;text-align:right;top:417px">-80.0</div><div class="t" style="left:18.500px;width:40px;text-align:right;top:443px">-90.0</div><div class="t" style="left:18.500px;width:40px;text-align:right;top:469px">-100.0</div><div class="t" style="left:18.500px;width:40px;text-align:right;top:494px">-110.0</div><div class="t" style="left:18.500px;width:40px;text-align:right;top:520px">-120.0</div><div class="t" style="left:18.500px;width:40px;text-align:right;top:545px">-130.0</div><div class="t" style="left:18.500px;width:40px;text-align:right;top:571px">-140.0</div><div class="t" style="left:18.500px;width:40px;text-align:right;top:597px">-150.0</div><div class="t" style="left:18.500px;width:40px;text-align:right;top:622px">-160.0</div><div class="t" style="left:18.500px;width:40px;text-align:right;top:648px">-170.0</div><div class="t" style="left:18.500px;width:40px;text-align:right;top:673px">-180.0</div>
<div class="t" style="left:57.7px;width:40px;text-align:center;top:694.300px">700</div><div class="t" style="left:90.7px;width:40px;text-align:center;top:694.300px">800</div><div class="t" style="left:146.7px;width:40px;text-align:center;top:694.300px">1.0k</div><div class="t" style="left:318.7px;width:40px;text-align:center;top:694.300px">2.0k</div><div class="t" style="left:418.7px;width:40px;text-align:center;top:694.300px">3.0k</div><div class="t" style="left:489.7px;width:40px;text-align:center;top:694.300px">4.0k</div><div class="t" style="left:545.7px;width:40px;text-align:center;top:694.300px">5.0k</div><div class="t" style="left:589.7px;width:40px;text-align:center;top:694.300px">6.0k</div><div class="t" style="left:627.7px;width:40px;text-align:center;top:694.300px">7.0k</div><div class="t" style="left:661.7px;width:40px;text-align:center;top:694.300px">8.0k</div><div class="t" style="left:717.7px;width:40px;text-align:center;top:694.300px">10.0k</div>
<div class="t" style="left:460px;top:707px">Frequency (Hz)</div>
<div class="t" style="left:-8px;top:435.500px;width:48px;text-align:center;font-size:13px;transform:rotate(-90deg)">dBV rms</div>
<div class="t" style="left:866px;top:196px;font:italic bold 20px 'Liberation Serif',serif;color:#7a7a7a;line-height:22px">S<span style="font-weight:normal;font-size:18px;position:relative;top:2px">+</span></div>
<div class="t" style="left:255px;top:372.800px;font-size:20.400px;line-height:23.550px;white-space:pre">YES - 5
с ОООС = 3 dB  и корр. НИ
Рпик = 100W  Rн = 4 Om</div>
<div class="a" style="left:208px;top:246px;width:227px;height:72px;background:linear-gradient(#3c82f4 0,#1668ec 3px,#0b60e8 10px,#0a5ae4 20px,#0a55e0 22px);border:1px solid #0a3fd0;border-top-left-radius:2px;border-top-right-radius:2px;box-sizing:border-box"><div class="t" style="left:3px;top:6px;font:bold 11.4px 'DejaVu Sans Condensed','DejaVu Sans',sans-serif;color:#fff;line-height:14px">IMD</div><div class="a" style="right:5px;top:5px;width:11px;height:11px;border:1px solid #fff;border-radius:2px;background:linear-gradient(135deg,#e8866a,#d2452a 60%,#c43c22)"><svg class="a" style="left:0;top:0" width="11" height="11" viewBox="0 0 11 11"><path d="M2.500 2.500l6 6M8.500 2.500l-6 6" stroke="#fff" stroke-width="2"/></svg></div><div class="a" style="left:3px;top:21px;width:219px;height:46px;background:#fff;border-top:1px solid #2a2a33;box-sizing:border-box"></div><div class="t" style="left:-4px;top:27.500px;width:219px;text-align:center;font-size:37px;line-height:40px">0.000103 %</div></div>
<div class="a" style="left:513px;top:246px;width:198px;height:72px;background:linear-gradient(#8ea4e8 0,#7b94e0 4px,#7590de 12px,#7a96e2 20px);border:1px solid #6a7ad6;border-top-left-radius:2px;border-top-right-radius:2px;box-sizing:border-box"><div class="t" style="left:3px;top:6px;font:bold 10.9px 'DejaVu Sans Condensed','DejaVu Sans',sans-serif;color:#d8e2f8;line-height:14px">Peak Amplitude</div><div class="a" style="right:5px;top:5px;width:11px;height:11px;border:1px solid #e8e0f0;border-radius:2px;background:linear-gradient(135deg,#c08a98,#b0647a 60%,#a85c72)"><svg class="a" style="left:0;top:0" width="11" height="11" viewBox="0 0 11 11"><path d="M2.500 2.500l6 6M8.500 2.500l-6 6" stroke="#fff" stroke-width="2"/></svg></div><div class="a" style="left:3px;top:21px;width:190px;height:46px;background:#fff;border-top:1px solid #2a2a33;box-sizing:border-box"></div><div class="t" style="left:3px;top:27.500px;width:190px;text-align:center;font-size:37px;line-height:40px">-8.39 dBV</div></div>
<div class="t" style="left:922px;top:179px;text-decoration:underline;letter-spacing:-0.2px">Overlays</div>
<div class="t" style="left:897px;top:195px;width:24px;text-align:center;transform:rotate(-90deg)">Set</div>
<div class="t" style="left:912px;top:196px;width:24px;text-align:center;transform:rotate(-90deg)">On</div>
<div class="cb" style="left:901px;top:214px;width:14px;height:13px"><div class="t" style="left:0;top:-2px;width:12px;text-align:center;text-decoration:underline">1</div></div><div class="a" style="left:918px;top:214px;width:13px;height:13px;box-sizing:border-box;background:#fff;border:1px solid #8c8a7c;border-right-color:#fff;border-bottom-color:#fff;box-shadow:inset 1px 1px 0 #5a584e"></div><div class="t" style="left:934px;top:214px;color:#3f9a3f;letter-spacing:-0.25px">Overlay 1</div>
<div class="cb" style="left:901px;top:230px;width:14px;height:13px"><div class="t" style="left:0;top:-2px;width:12px;text-align:center;text-decoration:underline">2</div></div><div class="a" style="left:918px;top:230px;width:13px;height:13px;box-sizing:border-box;background:#fff;border:1px solid #8c8a7c;border-right-color:#fff;border-bottom-color:#fff;box-shadow:inset 1px 1px 0 #5a584e"></div><div class="t" style="left:934px;top:230px;color:#2fbcbc;letter-spacing:-0.25px">Overlay 2</div>
<div class="cb" style="left:901px;top:245px;width:14px;height:13px"><div class="t" style="left:0;top:-2px;width:12px;text-align:center;text-decoration:underline">3</div></div><div class="a" style="left:918px;top:245px;width:13px;height:13px;box-sizing:border-box;background:#fff;border:1px solid #8c8a7c;border-right-color:#fff;border-bottom-color:#fff;box-shadow:inset 1px 1px 0 #5a584e"></div><div class="t" style="left:934px;top:245px;color:#8a1a8a;letter-spacing:-0.25px">Overlay 3</div>
<div class="cb" style="left:901px;top:261px;width:14px;height:13px"><div class="t" style="left:0;top:-2px;width:12px;text-align:center;text-decoration:underline">4</div></div><div class="a" style="left:918px;top:261px;width:13px;height:13px;box-sizing:border-box;background:#fff;border:1px solid #8c8a7c;border-right-color:#fff;border-bottom-color:#fff;box-shadow:inset 1px 1px 0 #5a584e"></div><div class="t" style="left:934px;top:261px;color:#ff30ff;letter-spacing:-0.25px">Overlay 4</div>
<div class="cb" style="left:901px;top:277px;width:14px;height:13px"><div class="t" style="left:0;top:-2px;width:12px;text-align:center;text-decoration:underline">5</div></div><div class="a" style="left:918px;top:277px;width:13px;height:13px;box-sizing:border-box;background:#fff;border:1px solid #8c8a7c;border-right-color:#fff;border-bottom-color:#fff;box-shadow:inset 1px 1px 0 #5a584e"></div><div class="t" style="left:934px;top:277px;color:#8a5a2a;letter-spacing:-0.25px">Overlay 5</div>
<div class="cb" style="left:901px;top:292px;width:14px;height:13px"><div class="t" style="left:0;top:-2px;width:12px;text-align:center;text-decoration:underline">6</div></div><div class="a" style="left:918px;top:292px;width:13px;height:13px;box-sizing:border-box;background:#fff;border:1px solid #8c8a7c;border-right-color:#fff;border-bottom-color:#fff;box-shadow:inset 1px 1px 0 #5a584e"></div><div class="t" style="left:934px;top:292px;color:#ff8a5a;letter-spacing:-0.25px">Overlay 6</div>
<div class="cb" style="left:901px;top:308px;width:14px;height:13px"><div class="t" style="left:0;top:-2px;width:12px;text-align:center;text-decoration:underline">C</div></div><div class="a" style="left:918px;top:308px;width:13px;height:13px;box-sizing:border-box;background:#fff;border:1px solid #8c8a7c;border-right-color:#fff;border-bottom-color:#fff;box-shadow:inset 1px 1px 0 #5a584e"></div><div class="t" style="left:934px;top:308px;color:#000;letter-spacing:0.32px">Composite</div>
<div class="cb" style="left:898px;top:324px;width:63px;height:18px"><div class="t" style="left:0;top:1px;width:61px;text-align:center">Options...</div></div>
<div class="a" style="left:997px;top:174px;width:1px;height:547px;background:#f8f7f2"></div>
<div class="a" style="left:910px;top:709px;width:8px;height:8px;background:#fff;border:1px solid #222"><div class="a" style="left:1.500px;top:3.500px;width:5px;height:1px;background:#223"></div><div class="a" style="left:3.500px;top:1.500px;width:1px;height:5px;background:#223"></div></div>
<div class="a" style="left:984px;top:709px;width:8px;height:8px;background:#fff;border:1px solid #222"><div class="a" style="left:1.500px;top:3.500px;width:5px;height:1px;background:#223"></div></div>
<div class="a" style="left:0;top:76px;width:1px;height:672px;background:#8a8878"></div><div class="a" style="left:1px;top:76px;width:1px;height:672px;background:#b4b1a0"></div><div class="a" style="left:2px;top:175px;width:1px;height:546px;background:#9c9a8a"></div>
<div class="a" style="left:3px;top:175px;width:1px;height:546px;background:#7c7a6c"></div>
<div class="a" style="left:2px;top:722px;width:996px;height:2px;background:#fff"></div>
<div class="a" style="left:5px;top:725px;width:115px;height:17px;box-sizing:border-box;border:1px solid #9d9a8a;border-right-color:#fff;border-bottom-color:#fff"><div class="t" style="left:3px;top:1px">Stopped</div></div><div class="a" style="left:123px;top:725px;width:97px;height:17px;box-sizing:border-box;border:1px solid #9d9a8a;border-right-color:#fff;border-bottom-color:#fff"><div class="t" style="left:3px;top:1px">Real Time</div></div><div class="a" style="left:223px;top:725px;width:69px;height:17px;box-sizing:border-box;border:1px solid #9d9a8a;border-right-color:#fff;border-bottom-color:#fff"><div class="t" style="left:3px;top:1px">48000 Hz</div></div><div class="a" style="left:295px;top:725px;width:49px;height:17px;box-sizing:border-box;border:1px solid #9d9a8a;border-right-color:#fff;border-bottom-color:#fff"><div class="t" style="left:3px;top:1px">24 Bit</div></div><div class="a" style="left:347px;top:725px;width:49px;height:17px;box-sizing:border-box;border:1px solid #9d9a8a;border-right-color:#fff;border-bottom-color:#fff"><div class="t" style="left:3px;top:1px">Stereo</div></div><div class="a" style="left:398px;top:725px;width:98px;height:17px;box-sizing:border-box;border:1px solid #9d9a8a;border-right-color:#fff;border-bottom-color:#fff"><div class="t" style="left:3px;top:1px">FFT 524288 pts</div></div><div class="a" style="left:499px;top:725px;width:71px;height:17px;box-sizing:border-box;border:1px solid #9d9a8a;border-right-color:#fff;border-bottom-color:#fff"><div class="t" style="left:3px;top:1px">Hanning</div></div><div class="a" style="left:572px;top:725px;width:424px;height:17px;box-sizing:border-box;border:1px solid #9d9a8a;border-right-color:#fff;border-bottom-color:#fff"><div class="t" style="left:3px;top:1px"></div></div>
</body></html>
